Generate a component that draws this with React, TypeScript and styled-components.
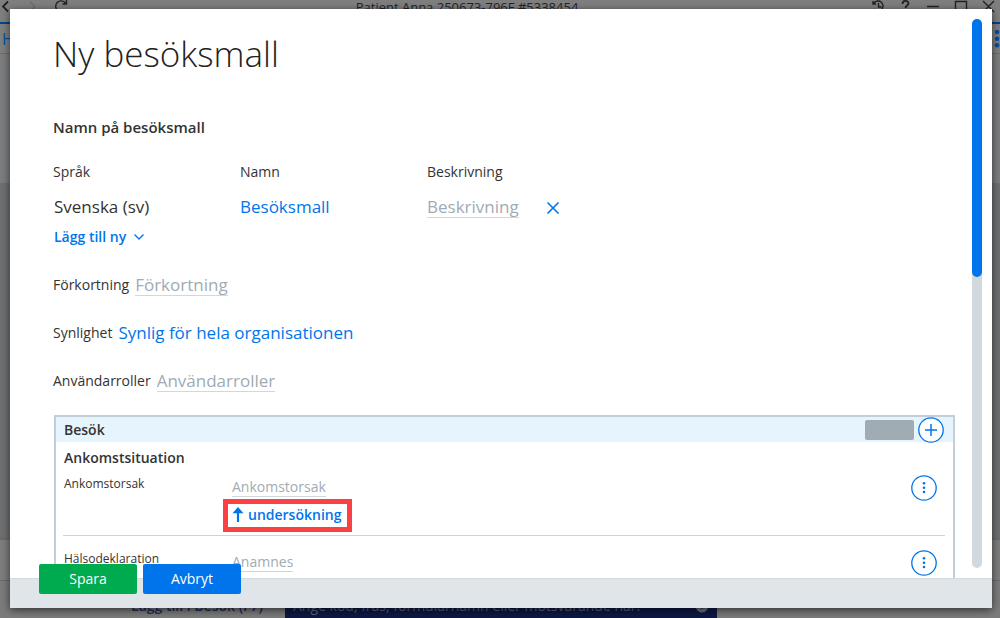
import React from 'react';
import styled, { createGlobalStyle, css } from 'styled-components';

const GlobalStyle = createGlobalStyle`
  * { box-sizing: border-box; }
  html, body { margin: 0; height: 100%; }
  #root { height: 100%; }
  body {
    font-family: 'Open Sans', 'Noto Sans', sans-serif;
    font-size: 14px;
    line-height: 20px;
    color: #333;
    background: #7f7f7f;
  }
  button, input { font: inherit; color: inherit; }
  button { cursor: pointer; }
`;

const blue = '#0075eb';
const grey = '#a1abb4';

const Window = styled.div`
  position: relative;
  display: flex;
  flex-direction: column;
  height: 100vh;
  overflow: hidden;
`;

const TitleBar = styled.header`
  display: flex;
  align-items: flex-start;
  justify-content: space-between;
  height: 24px;
  flex: none;
  border-bottom: 2px solid #00458c;
  color: #1f2328;
`;

const TitleGroup = styled.div`
  display: flex;
  flex: 1;
  gap: 12px;
  &:last-child { justify-content: flex-end; }
  svg { display: block; }
`;

const WindowTitle = styled.div`
  margin-right: 66px;
  line-height: 14px;
  font-size: 13px;
`;

const TabBar = styled.div`
  display: flex;
  justify-content: space-between;
  align-items: center;
  flex: none;
  height: 30px;
  padding: 0 0 0 2px;
  border-bottom: 1px solid #6a6e72;
  font-size: 16px;
  color: #004fa3;
  svg { display: block; }
`;

const Backdrop = styled.div`
  flex: 1;
  background: linear-gradient(#7c7d7e 129px, #6d6f71 129px);
`;

const BackdropFooter = styled.div`
  display: flex;
  align-items: flex-end;
  height: 80px;
  border-top: 2px solid #696c6f;
  background: linear-gradient(#7d7d7d 40px, #666d75 40px, #666d75 41px, #7b7b7b 41px);
`;

const EntryLabel = styled.div`
  width: 285px;
  padding-right: 22px;
  text-align: right;
  font-weight: 600;
  line-height: 24px;
  color: #222c57;
`;

const EntryBar = styled.div`
  display: flex;
  justify-content: space-between;
  align-items: center;
  width: 432px;
  height: 24px;
  padding: 0 8px;
  background: #0d1843;
  color: #59627c;
`;

const Dialog = styled.section`
  position: absolute;
  inset: 9px 8px 10px 10px;
  display: flex;
  flex-direction: column;
  background: #fff;
  box-shadow: 0 2px 8px rgba(0, 0, 0, 0.6);
`;

const DialogBody = styled.div`
  display: flex;
  flex: 1;
  min-height: 0;
  padding-right: 10px;
`;

const Content = styled.form`
  flex: 1;
  min-width: 0;
  overflow: hidden;
  padding: 21px 17px 0 43px;
`;

const ScrollTrack = styled.div`
  flex: none;
  width: 10px;
  margin: 10px 0;
  border-radius: 5px;
  background: #d2d9de;
`;

const ScrollThumb = styled.div`
  height: 47%;
  border-radius: 5px;
  background: ${blue};
`;

const Title = styled.h1`
  margin: 0;
  font-size: 35px;
  line-height: 48px;
  font-weight: 300;
  color: #222;
`;

const SectionTitle = styled.h2`
  margin: 39px 0 0;
  font-size: 15px;
  line-height: 20px;
  font-weight: 600;
`;

const NameTable = styled.table`
  margin-top: 25px;
  border-collapse: collapse;
  th, td { padding: 0; text-align: left; font-weight: 400; }
  th { height: 24px; vertical-align: top; }
  td { height: 41px; font-size: 17px; }
  td:first-child { padding-left: 1px; }
  th:nth-child(-n + 2) { width: 187px; }
`;

const field = css`
  field-sizing: content;
  padding: 0;
  border: 0;
  border-bottom: 1px solid transparent;
  border-radius: 0;
  background: none;
  outline: 0;
`;

const Input = styled.input<{ $small?: boolean }>`
  ${field}
  height: ${(p) => (p.$small ? 20 : 22)}px;
  font-size: ${(p) => (p.$small ? 14 : 17)}px;
  color: ${blue};
  &::placeholder { color: ${grey}; opacity: 1; }
  &:placeholder-shown { border-bottom-color: #d0d8de; }
`;

const Select = styled.select`
  ${field}
  appearance: none;
  font: inherit;
  font-size: 17px;
  height: 24px;
  color: ${blue};
`;

const IconButton = styled.button`
  display: inline-flex;
  margin-left: 27px;
  padding: 0;
  border: 0;
  background: none;
  vertical-align: middle;
`;

const LinkButton = styled.button`
  display: flex;
  align-items: center;
  gap: 7px;
  padding: 0 0 0 1px;
  border: 0;
  background: none;
  line-height: 20px;
  font-weight: 600;
  color: ${blue};
`;

const FieldList = styled.div`
  display: grid;
  gap: 26px;
  margin: 27px 0 23px;
`;

const FieldRow = styled.div`
  display: flex;
  align-items: center;
  gap: 6px;
  height: 22px;
`;

const Panel = styled.section`
  margin-left: 1px;
  border: 2px solid #c3ced7;
`;

const PanelHeader = styled.header`
  display: flex;
  align-items: center;
  justify-content: space-between;
  height: 25px;
  padding: 0 9px 0 8px;
  background: #e6f4fe;
`;

const PanelTitle = styled.h3`
  margin: 0;
  font-size: 14px;
  line-height: 20px;
  font-weight: 600;
`;

const PanelActions = styled.div`
  display: flex;
  align-items: center;
  gap: 4px;
`;

const Redacted = styled.div`
  width: 49px;
  height: 20px;
  border-radius: 2px;
  background: #a1abb4;
`;

const RoundButton = styled.button`
  display: grid;
  place-items: center;
  flex: none;
  width: 26px;
  height: 26px;
  padding: 0;
  border: 0;
  background: none;
  svg { display: block; }
`;

const PanelBody = styled.div`
  padding: 6px 8px 0 7px;
  h3 { padding-left: 1px; margin-bottom: 7px; }
`;

const Entry = styled.div`
  display: grid;
  grid-template-columns: 160px 1fr 34px;
  height: 61px;
  padding-left: 1px;
  border-bottom: 1px solid #cbd4db;
  & + & { margin-top: 14px; height: 40px; }
`;

const EntryName = styled.label`
  font-size: 12px;
  line-height: 18px;
`;

const EntryField = styled.div`
  display: flex;
  flex-direction: column;
  align-items: flex-start;
  padding: 2px 0 0 8px;
`;

const Highlight = styled.div`
  margin: 2px 0 0 -9px;
  padding: 1px 6px 2px 3px;
  border: 5px solid #fc4144;
  button { gap: 4px; }
`;

const DialogFooter = styled.footer`
  position: relative;
  display: flex;
  gap: 6px;
  flex: none;
  height: 30px;
  padding: 0 29px;
  border-top: 1px solid #d3dadf;
  background: #dfe5e9;
`;

const ActionButton = styled.button<{ $color: string }>`
  width: 98px;
  height: 30px;
  margin-top: -15px;
  padding: 0;
  border: 0;
  border-radius: 2px;
  background: ${(p) => p.$color};
  color: #fff;
`;

const PlusIcon = () => (
  <svg width="26" height="26" viewBox="0 0 26 26" fill="none" stroke={blue}>
    <circle cx="13" cy="13" r="12.2" fill="#fff" strokeWidth="1.3" />
    <path d="M13 7v12M7 13h12" strokeWidth="1.5" />
  </svg>
);

const DotsIcon = () => (
  <svg width="26" height="26" viewBox="0 0 26 26" fill={blue}>
    <circle cx="13" cy="13" r="12.2" fill="#fff" stroke={blue} strokeWidth="1.3" />
    <circle cx="13" cy="8.3" r="1.3" />
    <circle cx="13" cy="12.7" r="1.3" />
    <circle cx="13" cy="17" r="1.3" />
  </svg>
);

export default function App() {
  return (
    <>
      <GlobalStyle />
      <Window>
        <TitleBar>
          <TitleGroup>
            <svg width="80" height="14" viewBox="0 0 80 14" fill="none">
              <path d="M8 1.5 3 6.5l5 5" stroke="#1f2328" strokeWidth="1.8" />
              <path d="m30 1.5 5 5-5 5" stroke="#6b6d70" strokeWidth="1.4" />
              <path d="M65.5 3A5.5 5.5 0 1 0 66 9M66.5 0v4h-4" stroke="#1f2328" strokeWidth="1.4" />
            </svg>
          </TitleGroup>
          <WindowTitle>Patient Anna 250673-796F #5338454</WindowTitle>
          <TitleGroup>
            <svg width="130" height="14" viewBox="0 0 130 14" fill="none" stroke="#1f2328" strokeWidth="1.4">
              <path d="M4 3A5 5 0 1 1 4 9M3 1v3h3M8.5 3v4h3" />
              <path d="M32.5 4c0-4 6-4 6-.5 0 2-3 2-3 4.5" strokeWidth="1.8" />
              <path d="M57 6.5h12M85.5 1.5h11v11h-11zM113 1l11 11M124 1l-11 11" />
            </svg>
          </TitleGroup>
        </TitleBar>
        <TabBar>
          <span>H</span>
          <svg width="6" height="20" viewBox="0 0 6 20" fill="#004fa3">
            <circle cx="3" cy="3" r="2.3" />
            <circle cx="3" cy="9.7" r="2.3" />
            <circle cx="3" cy="16.3" r="2.3" />
          </svg>
        </TabBar>
        <Backdrop />
        <BackdropFooter>
          <EntryLabel>Lägg till i Besök (F7)</EntryLabel>
          <EntryBar>
            <span>Ange kod, fras, formulärnamn eller motsvarande här.</span>
            <svg width="14" height="14" viewBox="0 0 14 14">
              <circle cx="7" cy="7" r="6.5" fill="#6d7180" />
              <path d="m4 6 3 3 3-3" fill="none" stroke="#0d1843" strokeWidth="1.5" />
            </svg>
          </EntryBar>
        </BackdropFooter>

        <Dialog role="dialog" aria-labelledby="dialog-title">
          <DialogBody>
            <Content id="template-form">
              <Title id="dialog-title">Ny besöksmall</Title>
              <SectionTitle>Namn på besöksmall</SectionTitle>
              <NameTable>
                <thead>
                  <tr>
                    <th>Språk</th>
                    <th>Namn</th>
                    <th>Beskrivning</th>
                  </tr>
                </thead>
                <tbody>
                  <tr>
                    <td>Svenska (sv)</td>
                    <td><Input aria-label="Namn" defaultValue="Besöksmall" /></td>
                    <td>
                      <Input aria-label="Beskrivning" placeholder="Beskrivning" />
                      <IconButton type="button" aria-label="Ta bort">
                        <svg width="14" height="14" viewBox="0 0 14 14" stroke={blue} strokeWidth="1.6">
                          <path d="m1.5 1.5 11 11M12.5 1.5l-11 11" />
                        </svg>
                      </IconButton>
                    </td>
                  </tr>
                </tbody>
              </NameTable>
              <LinkButton type="button">
                Lägg till ny
                <svg width="12" height="8" viewBox="0 0 12 8" fill="none" stroke={blue} strokeWidth="1.3">
                  <path d="m1.5 1.5 4.5 4.5 4.5-4.5" />
                </svg>
              </LinkButton>
              <FieldList>
                <FieldRow>
                  <label htmlFor="abbr">Förkortning</label>
                  <Input id="abbr" placeholder="Förkortning" />
                </FieldRow>
                <FieldRow>
                  <label htmlFor="visibility">Synlighet</label>
                  <Select id="visibility">
                    <option>Synlig för hela organisationen</option>
                  </Select>
                </FieldRow>
                <FieldRow>
                  <label htmlFor="roles">Användarroller</label>
                  <Input id="roles" placeholder="Användarroller" />
                </FieldRow>
              </FieldList>
              <Panel>
                <PanelHeader>
                  <PanelTitle>Besök</PanelTitle>
                  <PanelActions>
                    <Redacted />
                    <RoundButton type="button" aria-label="Lägg till"><PlusIcon /></RoundButton>
                  </PanelActions>
                </PanelHeader>
                <PanelBody>
                  <PanelTitle>Ankomstsituation</PanelTitle>
                  <Entry>
                    <EntryName htmlFor="reason">Ankomstorsak</EntryName>
                    <EntryField>
                      <Input $small id="reason" placeholder="Ankomstorsak" />
                      <Highlight>
                        <LinkButton type="button">
                          <svg width="12" height="16" viewBox="0 0 12 16" fill={blue}>
                            <path d="M6 0 11.5 6.2H7.1V15H4.9V6.2H.5z" />
                          </svg>
                          undersökning
                        </LinkButton>
                      </Highlight>
                    </EntryField>
                    <RoundButton type="button" aria-label="Fler val"><DotsIcon /></RoundButton>
                  </Entry>
                  <Entry>
                    <EntryName htmlFor="health">Hälsodeklaration</EntryName>
                    <EntryField>
                      <Input $small id="health" placeholder="Anamnes" />
                    </EntryField>
                    <RoundButton type="button" aria-label="Fler val"><DotsIcon /></RoundButton>
                  </Entry>
                </PanelBody>
              </Panel>
            </Content>
            <ScrollTrack><ScrollThumb /></ScrollTrack>
          </DialogBody>
          <DialogFooter>
            <ActionButton $color="#00ab50" type="submit" form="template-form">Spara</ActionButton>
            <ActionButton $color={blue} type="button">Avbryt</ActionButton>
          </DialogFooter>
        </Dialog>
      </Window>
    </>
  );
}
